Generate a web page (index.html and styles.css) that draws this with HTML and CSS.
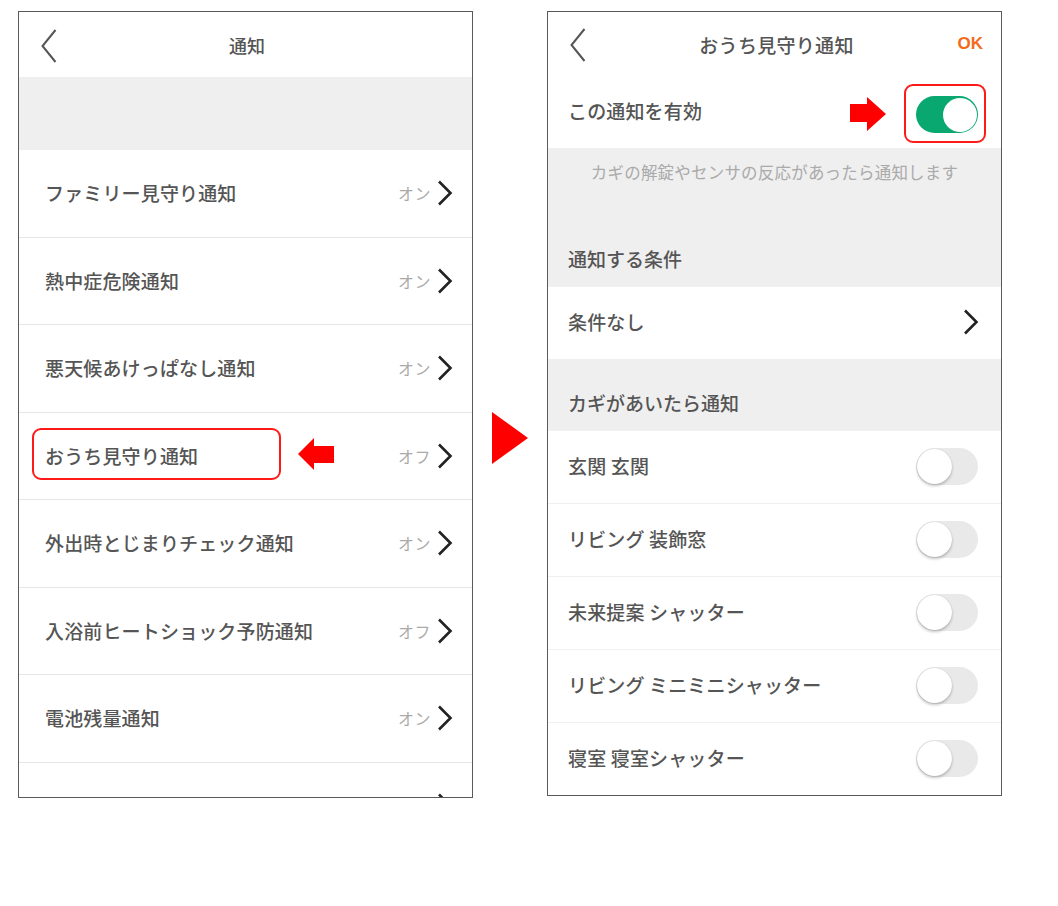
FILE: index.html
```html
<!DOCTYPE html>
<html lang="ja">
<head>
<meta charset="utf-8">
<link rel="stylesheet" href="styles.css">
</head>
<body>
<div class="page">
  <div class="panel panel-left">
    <div class="header">
      <svg class="back" width="16" height="34" viewBox="0 0 16 34"><path d="M14.5 1 L1.5 17 L14.5 33" fill="none" stroke="#555" stroke-width="2" stroke-linejoin="miter"/></svg>
      <div class="title">通知</div>
      <div class="header-side"></div>
    </div>
    <div class="gap-band"></div>
    <div class="nrow"><span class="label">ファミリー見守り通知</span><span class="state">オン</span><svg class="chev" width="16" height="26" viewBox="0 0 16 26"><path d="M2 1.5 L13.5 13 L2 24.5" fill="none" stroke="#222" stroke-width="2.6"/></svg></div>
    <div class="nrow"><span class="label">熱中症危険通知</span><span class="state">オン</span><svg class="chev" width="16" height="26" viewBox="0 0 16 26"><path d="M2 1.5 L13.5 13 L2 24.5" fill="none" stroke="#222" stroke-width="2.6"/></svg></div>
    <div class="nrow"><span class="label">悪天候あけっぱなし通知</span><span class="state">オン</span><svg class="chev" width="16" height="26" viewBox="0 0 16 26"><path d="M2 1.5 L13.5 13 L2 24.5" fill="none" stroke="#222" stroke-width="2.6"/></svg></div>
    <div class="nrow nrow-marked"><span class="label">おうち見守り通知</span><span class="state">オフ</span><svg class="chev" width="16" height="26" viewBox="0 0 16 26"><path d="M2 1.5 L13.5 13 L2 24.5" fill="none" stroke="#222" stroke-width="2.6"/></svg>
      <div class="mark-box mark-left"></div>
      <svg class="mark-arrow arrow-left" width="36" height="32" viewBox="0 0 36 32"><path d="M0 16 L16 0 L16 8 L36 8 L36 25 L16 25 L16 32 Z" fill="#ff0000"/></svg>
    </div>
    <div class="nrow"><span class="label">外出時とじまりチェック通知</span><span class="state">オン</span><svg class="chev" width="16" height="26" viewBox="0 0 16 26"><path d="M2 1.5 L13.5 13 L2 24.5" fill="none" stroke="#222" stroke-width="2.6"/></svg></div>
    <div class="nrow"><span class="label">入浴前ヒートショック予防通知</span><span class="state">オフ</span><svg class="chev" width="16" height="26" viewBox="0 0 16 26"><path d="M2 1.5 L13.5 13 L2 24.5" fill="none" stroke="#222" stroke-width="2.6"/></svg></div>
    <div class="nrow"><span class="label">電池残量通知</span><span class="state">オン</span><svg class="chev" width="16" height="26" viewBox="0 0 16 26"><path d="M2 1.5 L13.5 13 L2 24.5" fill="none" stroke="#222" stroke-width="2.6"/></svg></div>
    <div class="nrow"><span class="label"></span><span class="state"></span><svg class="chev" width="16" height="26" viewBox="0 0 16 26"><path d="M2 1.5 L13.5 13 L2 24.5" fill="none" stroke="#222" stroke-width="2.6"/></svg></div>
  </div>

  <div class="between">
    <svg class="big-tri" width="36" height="52" viewBox="0 0 36 52"><path d="M0 0 L36 26 L0 52 Z" fill="#ff0000"/></svg>
  </div>

  <div class="panel panel-right">
    <div class="header">
      <svg class="back" width="16" height="34" viewBox="0 0 16 34"><path d="M14.5 1 L1.5 17 L14.5 33" fill="none" stroke="#555" stroke-width="2"/></svg>
      <div class="title">おうち見守り通知</div>
      <div class="header-side ok">OK</div>
    </div>
    <div class="srow srow-enable">
      <span class="label">この通知を有効</span>
      <span class="toggle toggle-on"><span class="knob"></span></span>
      <svg class="mark-arrow arrow-right" width="36" height="34" viewBox="0 0 36 34"><path d="M36 17 L17 0 L17 7 L0 7 L0 25 L17 25 L17 34 Z" fill="#ff0000"/></svg>
      <div class="mark-box mark-right"></div>
    </div>
    <div class="desc">カギの解錠やセンサの反応があったら通知します</div>
    <div class="section">通知する条件</div>
    <div class="srow"><span class="label">条件なし</span><svg class="chev chev-r" width="16" height="26" viewBox="0 0 16 26"><path d="M2 1.5 L13.5 13 L2 24.5" fill="none" stroke="#222" stroke-width="2.6"/></svg></div>
    <div class="section">カギがあいたら通知</div>
    <div class="srow sep"><span class="label">玄関 玄関</span><span class="toggle"><span class="knob"></span></span></div>
    <div class="srow sep"><span class="label">リビング 装飾窓</span><span class="toggle"><span class="knob"></span></span></div>
    <div class="srow sep"><span class="label">未来提案 シャッター</span><span class="toggle"><span class="knob"></span></span></div>
    <div class="srow sep"><span class="label">リビング ミニミニシャッター</span><span class="toggle"><span class="knob"></span></span></div>
    <div class="srow"><span class="label">寝室 寝室シャッター</span><span class="toggle"><span class="knob"></span></span></div>
  </div>
</div>
</body>
</html>
```

FILE: styles.css
```css
* { box-sizing: border-box; }
html, body { margin: 0; padding: 0; background: #fff; }
body {
  font-family: "Noto Sans CJK JP", "Noto Sans", sans-serif;
  color: #555;
}
.page {
  display: flex;
  align-items: flex-start;
  padding: 11px 0 0 18px;
}
.panel {
  width: 455px;
  border: 1px solid #5a5a5a;
  overflow: hidden;
  background: #fff;
  display: flex;
  flex-direction: column;
}
.panel-left { height: 787px; }
.panel-right { height: 785px; }

.header {
  height: 65px;
  flex: none;
  display: grid;
  grid-template-columns: 1fr auto 1fr;
  align-items: center;
  padding: 0 19px 0 22px;
}
.panel-right .header { height: 66px; padding-right: 18px; }
.back { margin-top: 3px; }
.panel-right .back { margin-top: 0; }
.title {
  text-align: center;
  font-size: 18px;
  font-weight: 500;
  color: #555;
  margin-top: 1px;
}
.panel-right .title { font-size: 19px; letter-spacing: 0.3px; margin-top: -2px; }
.header-side { justify-self: end; }
.ok {
  color: #f26b1d;
  font-family: "Liberation Sans", Arial, sans-serif;
  font-weight: 700;
  font-size: 17px;
  margin-top: -2px;
}
.gap-band {
  height: 73px;
  flex: none;
  background: #efefef;
}
.nrow {
  position: relative;
  flex: none;
  height: 87.5px;
  border-bottom: 1px solid #e6e6e6;
  display: flex;
  align-items: center;
  padding: 0 19px 0 26px;
}
.label {
  flex: 1;
  font-size: 19px;
  font-weight: 500;
  color: #555;
  letter-spacing: 0.15px;
}
.nrow .label { margin-top: -1px; }
.state {
  font-size: 16px;
  color: #aaa;
  margin-right: 6px;
  letter-spacing: 0.5px;
}
.chev { flex: none; }
.mark-box {
  position: absolute;
  border: 2px solid #ff1a1a;
  border-radius: 9px;
}
.mark-left { left: 13px; top: 15px; width: 249px; height: 52px; }
.mark-arrow { position: absolute; }
.arrow-left { left: 279px; top: 25px; }

.between {
  width: 74px;
  flex: none;
  padding: 401px 0 0 19px;
}
.big-tri { display: block; }

.srow {
  position: relative;
  flex: none;
  height: 72px;
  display: flex;
  align-items: center;
  padding: 0 23px 3px 20px;
  background: #fff;
}
.srow.sep { height: 73px; border-bottom: 1px solid #f0f0f0; }
.srow-enable { height: 70px; padding-bottom: 0; }
.srow-enable .label { margin-top: -5px; }
.srow-enable .toggle { margin-top: 1px; }
.chev-r { margin-right: -1px; }
.srow .toggle { margin-bottom: -2px; }
.desc {
  flex: none;
  height: 67px;
  background: #efefef;
  text-align: center;
  font-size: 16.5px;
  color: #aaa;
  padding-top: 12px;
  letter-spacing: 0.2px;
}
.section {
  flex: none;
  height: 72px;
  background: #efefef;
  font-size: 19px;
  font-weight: 500;
  color: #555;
  padding: 30px 0 0 20px;
}
.toggle {
  flex: none;
  position: relative;
  width: 62px;
  height: 37px;
  border-radius: 19px;
  background: #e9e9e9;
}
.toggle .knob {
  position: absolute;
  left: 1px;
  top: 1px;
  width: 35px;
  height: 35px;
  border-radius: 50%;
  background: #fff;
  box-shadow: 0 2px 3px rgba(0,0,0,0.22), 0 0 1px rgba(0,0,0,0.2);
}
.toggle-on { background: #08a870; }
.toggle-on .knob {
  left: auto;
  right: 1.5px;
  top: 1.5px;
  width: 34px;
  height: 34px;
  box-shadow: none;
}
.arrow-right { left: 302px; top: 19px; }
.mark-right { left: 356px; top: 6px; width: 82px; height: 59px; }
```
